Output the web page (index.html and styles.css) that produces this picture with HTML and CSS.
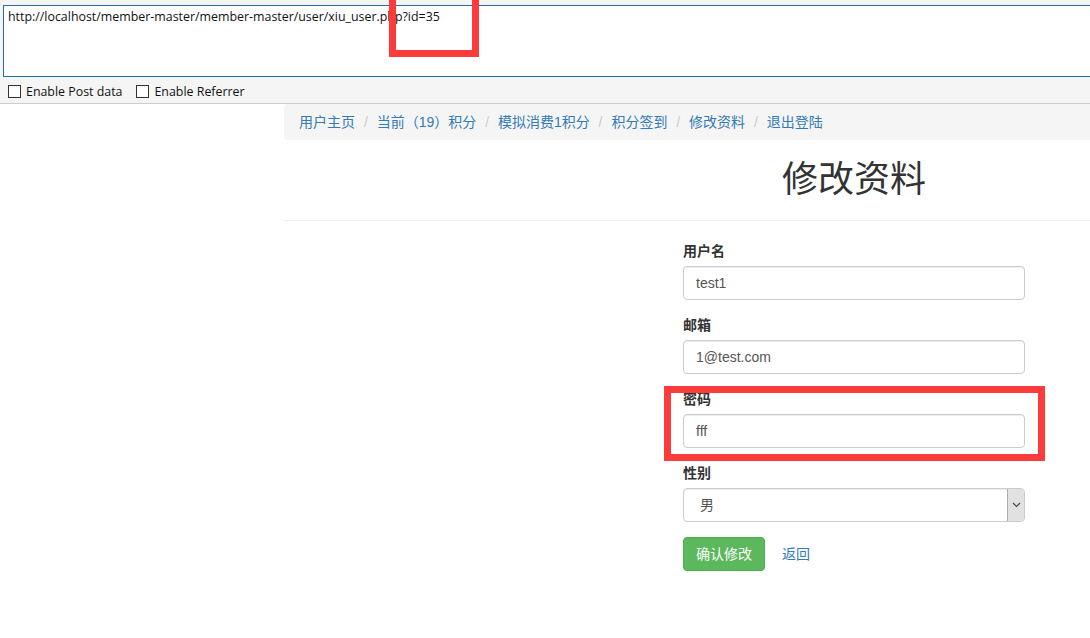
FILE: index.html
```html
<!DOCTYPE html>
<html lang="zh-CN">
<head>
<meta charset="utf-8">
<title>修改资料</title>
<link rel="stylesheet" href="styles.css">
</head>
<body>
<div class="hackbar">
  <div class="url-box">http://localhost/member-master/member-master/user/xiu_user.php?id=35</div>
  <div class="opts">
    <label class="opt"><span class="cb"></span>Enable Post data</label>
    <label class="opt"><span class="cb"></span>Enable Referrer</label>
  </div>
</div>
<div class="page">
  <ol class="breadcrumb">
    <li><a href="#">用户主页</a></li>
    <li><a href="#">当前（19）积分</a></li>
    <li><a href="#">模拟消费1积分</a></li>
    <li><a href="#">积分签到</a></li>
    <li><a href="#">修改资料</a></li>
    <li><a href="#">退出登陆</a></li>
  </ol>
  <div class="page-header"><h1>修改资料</h1></div>
  <form class="edit-form">
    <div class="form-group">
      <label class="lbl">用户名</label>
      <div class="input">test1</div>
    </div>
    <div class="form-group">
      <label class="lbl">邮箱</label>
      <div class="input">1@test.com</div>
    </div>
    <div class="form-group">
      <label class="lbl">密码</label>
      <div class="input">fff</div>
    </div>
    <div class="form-group">
      <label class="lbl">性别</label>
      <div class="select">
        <span class="select-val">男</span>
        <span class="select-arrow"><svg width="9" height="6" viewBox="0 0 9 6"><path d="M1 1 L4.5 4.5 L8 1" fill="none" stroke="#444" stroke-width="1.1"/></svg></span>
      </div>
    </div>
    <div class="actions">
      <button type="button" class="btn-ok">确认修改</button>
      <a href="#" class="back">返回</a>
    </div>
  </form>
</div>
<div class="mark mark-url"></div>
<div class="mark mark-pwd"></div>
</body>
</html>
```
FILE: styles.css
```css
html, body {
  margin: 0;
  padding: 0;
}
body {
  width: 1090px;
  height: 638px;
  overflow: hidden;
  position: relative;
  background: #fff;
  font-family: "Liberation Sans", "Noto Sans CJK SC", sans-serif;
  font-size: 14px;
  line-height: 20px;
  color: #333;
}
.hackbar {
  background: #f5f5f5;
  height: 103px;
  border-bottom: 1px solid #cdcdcd;
  box-sizing: content-box;
  overflow: hidden;
}
.url-box {
  margin: 5px -20px 0 3px;
  height: 72px;
  box-sizing: border-box;
  background: #fff;
  border: 1px solid #1f6fb6;
  padding: 2px 4px;
  font-family: "Open Sans", "Noto Sans", sans-serif;
  font-size: 12.4px;
  line-height: 18px;
  color: #111;
}
.opts {
  display: flex;
  padding: 7px 0 0 8px;
  gap: 14px;
  font-family: "Open Sans", "Noto Sans", sans-serif;
  font-size: 12.4px;
  line-height: 15px;
  color: #111;
}
.opt {
  display: flex;
  align-items: center;
}
.cb {
  width: 13px;
  height: 13px;
  box-sizing: border-box;
  border: 1px solid #333;
  background: #fff;
  margin-right: 5px;
}
.page {
  width: 1140px;
  margin-left: 284px;
}
.breadcrumb {
  margin: 0 0 20px;
  padding: 8px 15px;
  list-style: none;
  background: #f5f5f5;
  border-radius: 4px;
}
.breadcrumb li {
  display: inline-block;
}
.breadcrumb li + li::before {
  content: "/\00a0";
  padding: 0 5px;
  color: #ccc;
}
.breadcrumb a, .back {
  color: #337ab7;
  text-decoration: none;
}
.page-header {
  padding-bottom: 20px;
  border-bottom: 1px solid #eee;
}
.page-header h1 {
  margin: 0;
  font-size: 36px;
  line-height: 40px;
  font-weight: 400;
  text-align: center;
  color: #333;
}
.edit-form {
  margin: 20px 0 0 399px;
  width: 342px;
}
.form-group {
  margin-bottom: 15px;
}
.lbl {
  display: block;
  font-weight: bold;
  margin-bottom: 5px;
  font-size: 14px;
}
.input, .select {
  height: 34px;
  box-sizing: border-box;
  padding: 6px 12px;
  border: 1px solid #ccc;
  border-radius: 4px;
  box-shadow: inset 0 1px 1px rgba(0,0,0,.075);
  color: #555;
  font-size: 14px;
  line-height: 20px;
  background: #fff;
}
.select {
  position: relative;
  padding-left: 16px;
}
.select-arrow {
  position: absolute;
  right: 0;
  top: 0;
  bottom: 0;
  width: 17px;
  box-sizing: border-box;
  background: #e1e1e1;
  border-left: 1px solid #adadad;
  border-radius: 0 3px 3px 0;
  display: flex;
  align-items: center;
  justify-content: center;
}
.actions {
  display: flex;
  align-items: center;
}
.btn-ok {
  height: 34px;
  padding: 6px 12px;
  border: 1px solid #4cae4c;
  border-radius: 4px;
  background: #5cb85c;
  color: #fff;
  font-family: inherit;
  font-size: 14px;
  line-height: 20px;
}
.back {
  margin-left: 17px;
}
.mark {
  position: absolute;
  border: 7px solid #fd3b3b;
  box-sizing: border-box;
}
.mark-url {
  left: 389px;
  top: -7px;
  width: 90px;
  height: 64px;
}
.mark-pwd {
  left: 664px;
  top: 386px;
  width: 381px;
  height: 75px;
}
```
